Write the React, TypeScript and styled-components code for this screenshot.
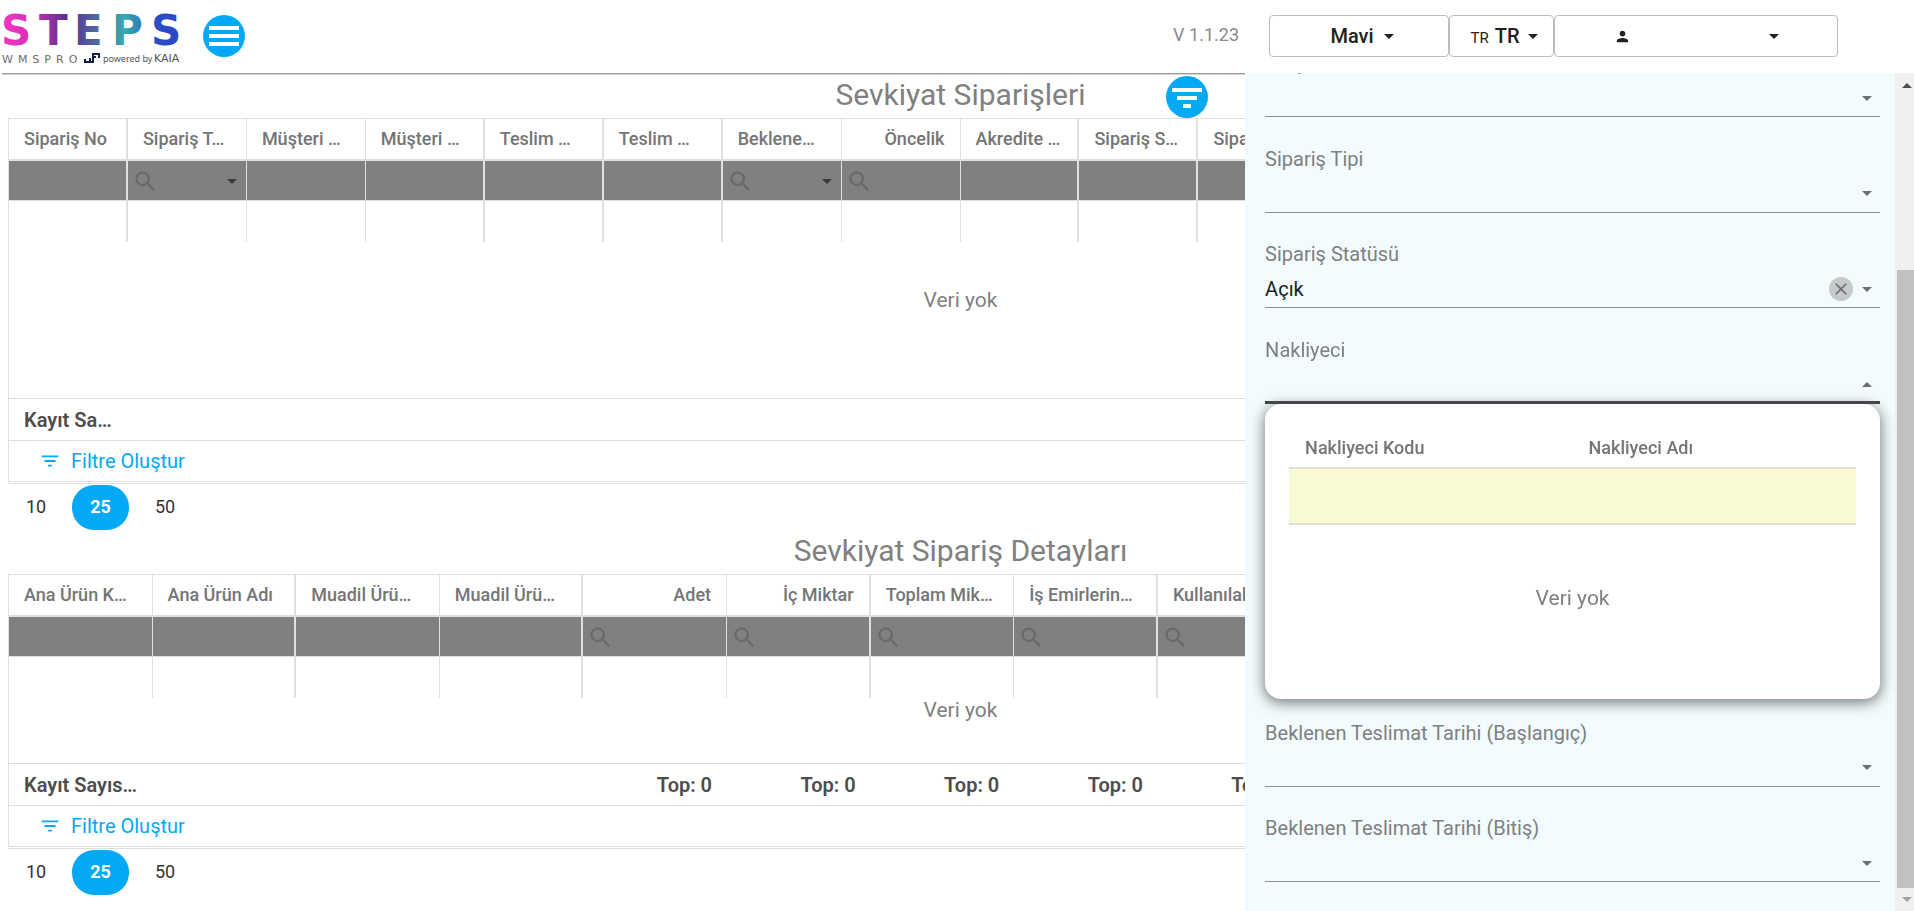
import React from "react";
import styled, { createGlobalStyle, css } from "styled-components";
import { MdSearch, MdFilterList, MdPerson, MdClose } from "react-icons/md";

const GlobalStyle = createGlobalStyle`
  *, *::before, *::after { box-sizing: border-box; }
  body {
    margin: 0;
    background: #fff;
    color: #757575;
    font-family: Roboto, "Liberation Sans", sans-serif;
    font-size: 18px;
    overflow: hidden;
  }
  button, input, select { font: inherit; color: inherit; }
`;

const ACCENT = "#03a9f4";
const LINE = "#e0e0e0";

const Page = styled.div`
  display: flex;
  flex-direction: column;
  height: 100vh;
`;

/* ---------- top bar ---------- */

const TopBar = styled.header`
  display: flex;
  align-items: flex-start;
  flex: none;
  height: 73px;
  padding: 0 76px 0 0;
`;

const LogoLink = styled.a`
  display: block;
  width: 188px;
  height: 72px;
  margin-right: 15px;
`;

const RoundButton = styled.button`
  display: flex;
  align-items: center;
  justify-content: center;
  flex: none;
  width: 42px;
  height: 42px;
  padding: 0;
  border: 0;
  border-radius: 50%;
  background: ${ACCENT};
  color: #fff;
`;

const MenuButton = styled(RoundButton)`
  margin-top: 15px;
`;

const TopRight = styled.div`
  display: flex;
  align-items: center;
  margin: 15px 0 0 auto;
`;

const Version = styled.span`
  margin-right: 30px;
  padding-bottom: 3px;
  color: #8a8a8a;
`;

const TopButton = styled.button<{ $width: number; $gap: number; $shift?: number }>`
  display: flex;
  align-items: center;
  justify-content: center;
  gap: ${(p) => p.$gap}px;
  width: ${(p) => p.$width}px;
  height: 42px;
  padding: 0 0 0 ${(p) => p.$shift ?? 0}px;
  border: 1px solid #bdbdbd;
  border-radius: 4px;
  background: #fff;
  color: #212121;
  font-size: 20px;
  font-weight: 500;
`;

const Flag = styled.span`
  margin-right: 6px;
  font-size: 15px;
  font-weight: 400;
`;

const Caret = styled.span<{ $up?: boolean; $color?: string }>`
  flex: none;
  width: 10px;
  height: 5px;
  border-left: 5px solid transparent;
  border-right: 5px solid transparent;
  ${(p) =>
    p.$up
      ? css`border-bottom: 5px solid ${p.$color ?? "currentColor"};`
      : css`border-top: 5px solid ${p.$color ?? "currentColor"};`}
`;

/* ---------- main area ---------- */

const Main = styled.main`
  flex: 1;
  min-height: 0;
  overflow: hidden;
  border-top: 1px solid #9a9a9a;
  margin-left: 2px;
  padding: 2px 1px 0 6px;
  box-shadow: inset 0 1px 0 #d6d6d6;
`;

const TitleRow = styled.div`
  display: grid;
  grid-template-columns: 1fr auto 1fr;
  height: 42px;
  align-items: center;
`;

const Title = styled.h2`
  grid-column: 2;
  margin: 0;
  padding-bottom: 4px;
  color: #808080;
  font-size: 30px;
  font-weight: 400;
  line-height: 38px;
`;

const FilterToggle = styled(RoundButton)`
  margin-left: 80px;
`;

const GridFrame = styled.section`
  border: 1px solid ${LINE};
`;

const DataTable = styled.table`
  width: 100%;
  table-layout: fixed;
  border-collapse: separate;
  border-spacing: 0;
`;

const HeadCell = styled.th<{ $thick?: boolean; $right?: boolean }>`
  height: 42px;
  padding: 0 15px 2px;
  overflow: hidden;
  white-space: nowrap;
  color: #757575;
  font-weight: 500;
  text-align: ${(p) => (p.$right ? "right" : "left")};
  border-right: ${(p) => (p.$thick ? 2 : 1)}px solid ${LINE};
  border-bottom: 2px solid ${LINE};
`;

const FilterCell = styled.td<{ $thick?: boolean }>`
  height: 40px;
  padding: 0;
  background: #808080;
  border-right: ${(p) => (p.$thick ? 2 : 1)}px solid ${LINE};
  border-bottom: 1px solid ${LINE};
`;

const FilterBox = styled.div`
  display: flex;
  align-items: center;
  height: 39px;
  padding: 2px 9px 0 4px;
  color: #696969;
`;

const FilterInput = styled.input`
  flex: 1;
  width: 0;
  min-width: 0;
  height: 30px;
  padding: 0 4px;
  border: 0;
  outline: 0;
  background: transparent;
`;

const FilterSelect = styled.select`
  flex: 1;
  width: 0;
  min-width: 0;
  height: 30px;
  border: 0;
  appearance: none;
  background: transparent;
`;

const BlankCell = styled.td<{ $thick?: boolean }>`
  height: 41px;
  padding: 0;
  border-right: ${(p) => (p.$thick ? 2 : 1)}px solid ${LINE};
`;

const NoDataCell = styled.td<{ $height: number; $top: number }>`
  height: ${(p) => p.$height}px;
  padding: ${(p) => p.$top}px 0 0;
  vertical-align: top;
  text-align: center;
  color: #808080;
  font-size: 21px;
  line-height: 24px;
`;

const TotalCell = styled.td<{ $right?: boolean }>`
  height: 42px;
  padding: 0 15px;
  overflow: hidden;
  white-space: nowrap;
  border-top: 1px solid ${LINE};
  color: #4d4d4d;
  font-size: 20px;
  font-weight: 600;
  text-align: ${(p) => (p.$right ? "right" : "left")};
`;

const FilterBuilder = styled.div`
  display: flex;
  align-items: center;
  height: 41px;
  padding-left: 30px;
  border-top: 1px solid ${LINE};
  color: ${ACCENT};
`;

const FilterLink = styled.button`
  display: flex;
  align-items: center;
  gap: 10px;
  padding: 0;
  border: 0;
  background: none;
  color: ${ACCENT};
  font-size: 20px;
`;

const Pager = styled.nav`
  display: flex;
  align-items: center;
  margin-top: 1px;
  padding: 1px 0 2px;
  border-top: 1px solid ${LINE};
`;

const PageSize = styled.button<{ $active?: boolean }>`
  height: 45px;
  padding: 0 18px 2px;
  border: 0;
  border-radius: 22px;
  background: ${(p) => (p.$active ? ACCENT : "transparent")};
  color: ${(p) => (p.$active ? "#fff" : "#333")};
  font-weight: ${(p) => (p.$active ? 700 : 400)};
  & + & { margin-left: 8px; }
`;

/* ---------- filter drawer ---------- */

const Drawer = styled.aside`
  position: fixed;
  top: 73px;
  right: 0;
  bottom: 0;
  display: flex;
  width: calc(35% - 1px);
  min-width: 460px;
  background: #f2fbfe;
`;

const Fields = styled.form`
  display: flex;
  flex: 1;
  flex-direction: column;
  min-width: 0;
  padding: 0 15px 29px 20px;
`;

const FieldBox = styled.div<{ $open?: boolean; $clipped?: boolean }>`
  position: relative;
  display: flex;
  flex-direction: column;
  justify-content: flex-end;
  min-height: 0;
  ${(p) =>
    p.$clipped
      ? css`flex: none; height: 44px; overflow: hidden;`
      : css`flex: 1;`}
  z-index: ${(p) => (p.$open ? 1 : 0)};
`;

const Label = styled.label`
  margin-bottom: 6px;
  color: #808080;
  font-size: 20px;
  line-height: 24px;
`;

const Control = styled.div<{ $open?: boolean }>`
  position: relative;
  z-index: 2;
  display: flex;
  flex: none;
  align-items: center;
  gap: 9px;
  height: 36px;
  padding: 0 8px 2px 0;
  box-shadow: inset 0 ${(p) => (p.$open ? "-3px" : "-1px")} 0 ${(p) => (p.$open ? "#444649" : "#8b9295")};
`;

const Select = styled.select`
  flex: 1;
  min-width: 0;
  height: 32px;
  padding: 0;
  border: 0;
  outline: 0;
  appearance: none;
  background: transparent;
  color: #212121;
  font-size: 20px;
`;

const ClearButton = styled.button`
  display: flex;
  align-items: center;
  justify-content: center;
  width: 24px;
  height: 24px;
  padding: 0;
  border: 0;
  border-radius: 50%;
  background: #c5c9ca;
  color: #6b6f70;
`;

const Covered = styled.div`
  flex: 3;
  border-bottom: 1px solid transparent;
`;

const Popup = styled.div`
  position: absolute;
  top: 100%;
  left: 0;
  right: 0;
  height: 295px;
  padding: 24px 24px 0;
  border-radius: 16px;
  background: #fff;
  box-shadow: 0 3px 14px 1px rgba(0, 0, 0, 0.5);
`;

const PopupHead = styled.th`
  width: 50%;
  height: 41px;
  padding: 0 16px;
  border-bottom: 2px solid ${LINE};
  color: #757575;
  font-weight: 500;
  text-align: left;
`;

const PopupFilter = styled.td`
  height: 56px;
  padding: 0;
  border-bottom: 2px solid ${LINE};
  background: #fafad2;
`;

const ScrollBar = styled.div`
  display: flex;
  flex: none;
  flex-direction: column;
  align-items: center;
  width: 19px;
  padding: 10px 0 9px 5px;
  background: #f0f0f0;
`;

const ScrollTrack = styled.div`
  display: flex;
  flex: 1;
  align-self: stretch;
  flex-direction: column;
  justify-content: flex-end;
  margin: 8px 0 9px -3px;
`;

const ScrollThumb = styled.div`
  height: 78%;
  background: #c1c1c1;
`;

/* ---------- parts ---------- */

const wordmark = [
  { letter: "S", x: 1 },
  { letter: "T", x: 39 },
  { letter: "E", x: 74 },
  { letter: "P", x: 112 },
  { letter: "S", x: 151 },
];

function Logo() {
  return (
    <svg width="188" height="72" viewBox="0 0 188 72" role="img" aria-label="STEPS WMSPRO">
      <defs>
        <linearGradient id="steps" gradientUnits="userSpaceOnUse" x1="2" y1="30" x2="184" y2="30">
          <stop offset="0" stopColor="#f436c4" />
          <stop offset="0.16" stopColor="#d62fb8" />
          <stop offset="0.36" stopColor="#5b2d91" />
          <stop offset="0.56" stopColor="#4c79a4" />
          <stop offset="0.68" stopColor="#35abae" />
          <stop offset="0.84" stopColor="#2b4fc8" />
          <stop offset="1" stopColor="#2b45c9" />
        </linearGradient>
      </defs>
      {wordmark.map((w) => (
        <text
          key={w.x}
          x={w.x}
          y="45"
          fontFamily="DejaVu Sans, sans-serif"
          fontWeight="700"
          fontSize="42"
          fill="url(#steps)"
        >
          {w.letter}
        </text>
      ))}
      <text x="2" y="63" fontFamily="DejaVu Sans, sans-serif" fontSize="11" letterSpacing="5" fill="#6d6d6d">
        WMSPRO
      </text>
      <path
        d="M85 59v3h5v-4M90 62h3v-8h6v4M93 57h3"
        fill="none"
        stroke="#121a4b"
        strokeWidth="2"
      />
      <text x="103" y="62" fontFamily="Noto Sans, sans-serif" fontSize="9" fill="#555">
        powered by
      </text>
      <text x="154" y="62" fontFamily="DejaVu Sans, sans-serif" fontSize="11" fill="#555">
        KAIA
      </text>
    </svg>
  );
}

function Bars() {
  return (
    <svg width="30" height="22" viewBox="0 0 30 22" aria-hidden="true">
      <path d="M0 1h30v4H0zM0 9h30v4H0zM0 17h30v4H0z" fill="#fff" />
    </svg>
  );
}

function Funnel() {
  return (
    <svg width="30" height="22" viewBox="0 0 30 22" aria-hidden="true">
      <path d="M0 2h30v4H0zM5 10h20v4H5zM11 18h8v4h-8z" fill="#fff" />
    </svg>
  );
}

type Column = {
  title?: string;
  filter?: "search" | "list";
  right?: boolean;
  thick?: boolean;
  total?: string;
  totalRight?: boolean;
};

type GridProps = {
  name: string;
  columns: Column[];
  lastWidth?: string;
  bodyHeight: number;
  bodyTop: number;
};

function DataGrid({ name, columns, lastWidth, bodyHeight, bodyTop }: GridProps) {
  return (
    <>
      <GridFrame>
        <DataTable aria-label={name}>
          <colgroup>
            {columns.map((_, i) => (
              <col key={i} style={i === columns.length - 1 && lastWidth ? { width: lastWidth } : undefined} />
            ))}
          </colgroup>
          <thead>
            <tr>
              {columns.map((c, i) => (
                <HeadCell key={i} $thick={c.thick} $right={c.right}>
                  {c.title}
                </HeadCell>
              ))}
            </tr>
            <tr>
              {columns.map((c, i) => (
                <FilterCell key={i} $thick={c.thick}>
                  {c.filter && (
                    <FilterBox>
                      <MdSearch size={27} />
                      {c.filter === "list" ? (
                        <>
                          <FilterSelect aria-label={c.title} />
                          <Caret $color="#3a3a3a" />
                        </>
                      ) : (
                        <FilterInput aria-label={c.title} />
                      )}
                    </FilterBox>
                  )}
                </FilterCell>
              ))}
            </tr>
          </thead>
          <tbody>
            <tr>
              {columns.map((c, i) => (
                <BlankCell key={i} $thick={c.thick} />
              ))}
            </tr>
            <tr>
              <NoDataCell colSpan={columns.length} $height={bodyHeight} $top={bodyTop}>
                Veri yok
              </NoDataCell>
            </tr>
          </tbody>
          <tfoot>
            <tr>
              {columns.map((c, i) => (
                <TotalCell key={i} $right={c.totalRight}>
                  {c.total}
                </TotalCell>
              ))}
            </tr>
          </tfoot>
        </DataTable>
        <FilterBuilder>
          <FilterLink type="button">
            <MdFilterList size={22} />
            Filtre Oluştur
          </FilterLink>
        </FilterBuilder>
      </GridFrame>
      <Pager aria-label={name}>
        <PageSize>10</PageSize>
        <PageSize $active>25</PageSize>
        <PageSize>50</PageSize>
      </Pager>
    </>
  );
}

type FieldProps = {
  id: string;
  label: string;
  value?: string;
  clipped?: boolean;
  open?: boolean;
  children?: React.ReactNode;
};

function Field({ id, label, value, clipped, open, children }: FieldProps) {
  return (
    <FieldBox $clipped={clipped} $open={open}>
      <Label htmlFor={id}>{label}</Label>
      <Control $open={open}>
        <Select id={id}>{value && <option>{value}</option>}</Select>
        {value && (
          <ClearButton type="button" aria-label={label}>
            <MdClose size={20} />
          </ClearButton>
        )}
        <Caret $up={open} $color="#6a7073" />
      </Control>
      {children}
    </FieldBox>
  );
}

const orderColumns: Column[] = [
  { title: "Sipariş No", thick: true, total: "Kayıt Sa…" },
  { title: "Sipariş T…", filter: "list" },
  { title: "Müşteri …" },
  { title: "Müşteri …", thick: true },
  { title: "Teslim …", thick: true },
  { title: "Teslim …", thick: true },
  { title: "Beklene…", filter: "list" },
  { title: "Öncelik", filter: "search", right: true },
  { title: "Akredite …", thick: true },
  { title: "Sipariş S…", thick: true },
  { title: "Sipa…" },
  {},
  {},
  {},
  {},
  {},
];

const sum = { filter: "search", total: "Top: 0", totalRight: true } as const;

const detailColumns: Column[] = [
  { title: "Ana Ürün K…", total: "Kayıt Sayıs…" },
  { title: "Ana Ürün Adı", thick: true },
  { title: "Muadil Ürü…" },
  { title: "Muadil Ürü…", thick: true },
  { title: "Adet", right: true, ...sum },
  { title: "İç Miktar", right: true, thick: true, ...sum },
  { title: "Toplam Mik…", ...sum },
  { title: "İş Emirlerin…", thick: true, ...sum },
  { title: "Kullanılab…", ...sum },
  {},
  {},
  {},
  {},
  {},
];

export default function App() {
  return (
    <Page>
      <GlobalStyle />
      <TopBar>
        <LogoLink href="#">
          <Logo />
        </LogoLink>
        <MenuButton type="button" aria-label="Menu">
          <Bars />
        </MenuButton>
        <TopRight>
          <Version>V 1.1.23</Version>
          <TopButton type="button" $width={180} $gap={10} $shift={6}>
            Mavi <Caret />
          </TopButton>
          <TopButton type="button" $width={105} $gap={9} $shift={6}>
            <span>
              <Flag>TR</Flag>TR
            </span>
            <Caret />
          </TopButton>
          <TopButton type="button" $width={284} $gap={138} aria-label="User">
            <MdPerson size={17} />
            <Caret />
          </TopButton>
        </TopRight>
      </TopBar>

      <Main>
        <TitleRow>
          <Title>Sevkiyat Siparişleri</Title>
          <FilterToggle type="button" aria-label="Filter">
            <Funnel />
          </FilterToggle>
        </TitleRow>
        <DataGrid name="Sevkiyat Siparişleri" columns={orderColumns} bodyHeight={156} bodyTop={46} />
        <TitleRow>
          <Title>Sevkiyat Sipariş Detayları</Title>
        </TitleRow>
        <DataGrid
          name="Sevkiyat Sipariş Detayları"
          columns={detailColumns}
          lastWidth="36px"
          bodyHeight={65}
          bodyTop={0}
        />
      </Main>

      <Drawer>
        <Fields>
          <Field id="customer" label="Müşteri" clipped />
          <Field id="type" label="Sipariş Tipi" />
          <Field id="status" label="Sipariş Statüsü" value="Açık" />
          <Field id="carrier" label="Nakliyeci" open>
            <Popup>
              <DataTable aria-label="Nakliyeci">
                <thead>
                  <tr>
                    <PopupHead>Nakliyeci Kodu</PopupHead>
                    <PopupHead>Nakliyeci Adı</PopupHead>
                  </tr>
                </thead>
                <tbody>
                  <tr>
                    <PopupFilter />
                    <PopupFilter />
                  </tr>
                  <tr>
                    <NoDataCell colSpan={2} $height={150} $top={61}>
                      Veri yok
                    </NoDataCell>
                  </tr>
                </tbody>
              </DataTable>
            </Popup>
          </Field>
          <Covered />
          <Field id="from" label="Beklenen Teslimat Tarihi (Başlangıç)" />
          <Field id="to" label="Beklenen Teslimat Tarihi (Bitiş)" />
        </Fields>
        <ScrollBar aria-hidden="true">
          <Caret $up $color="#505050" />
          <ScrollTrack>
            <ScrollThumb />
          </ScrollTrack>
          <Caret $color="#a0a0a0" />
        </ScrollBar>
      </Drawer>
    </Page>
  );
}
